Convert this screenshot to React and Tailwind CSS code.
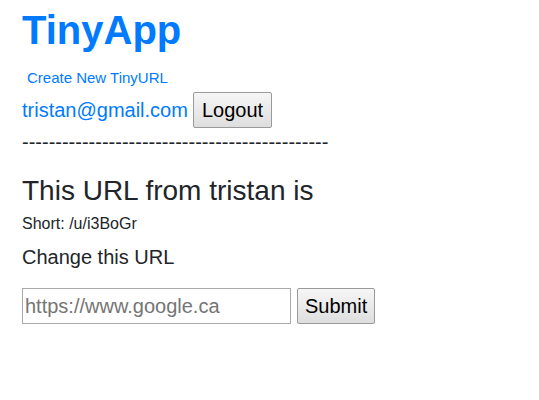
import React from 'react';

export default function App() {
  return (
    <div className="min-h-[400px] bg-white px-[22px] pt-[6px] text-[#212529] font-['Liberation_Sans',Arial,sans-serif]">
      <h1 className="text-[40px] font-bold leading-[48px] text-[#007bff]">TinyApp</h1>
      <div className="mt-[14px] pl-[5px] text-[15px] leading-[20px] text-[#007bff]">Create New TinyURL</div>
      <div className="mt-[4px] flex items-center gap-[5px]">
        <span className="text-[20px] text-[#007bff]">tristan@gmail.com</span>
        <button className="h-[36px] rounded-[2px] border border-[#9a9a9a] bg-gradient-to-b from-[#f6f6f6] to-[#dedede] px-[8px] text-[20px] text-black">
          Logout
        </button>
      </div>
      <div className="mt-[2px] text-[20px] leading-[24px]">{'-'.repeat(46)}</div>
      <h3 className="mt-[21px] text-[28px] leading-[32px]">This URL from tristan is</h3>
      <p className="mt-[7px] text-[16px] leading-[20px]">Short: /u/i3BoGr</p>
      <p className="mt-[10px] text-[20px] leading-[26px]">Change this URL</p>
      <form className="mt-[18px] flex items-center gap-[6px]" onSubmit={e => e.preventDefault()}>
        <input
          className="h-[36px] w-[269px] border border-[#a9a9a9] px-[2px] text-[20px] placeholder:text-[#757575] outline-none"
          placeholder="https://www.google.ca"
        />
        <button className="h-[36px] rounded-[2px] border border-[#9a9a9a] bg-gradient-to-b from-[#f6f6f6] to-[#dedede] px-[7px] text-[20px] text-black">
          Submit
        </button>
      </form>
    </div>
  );
}
